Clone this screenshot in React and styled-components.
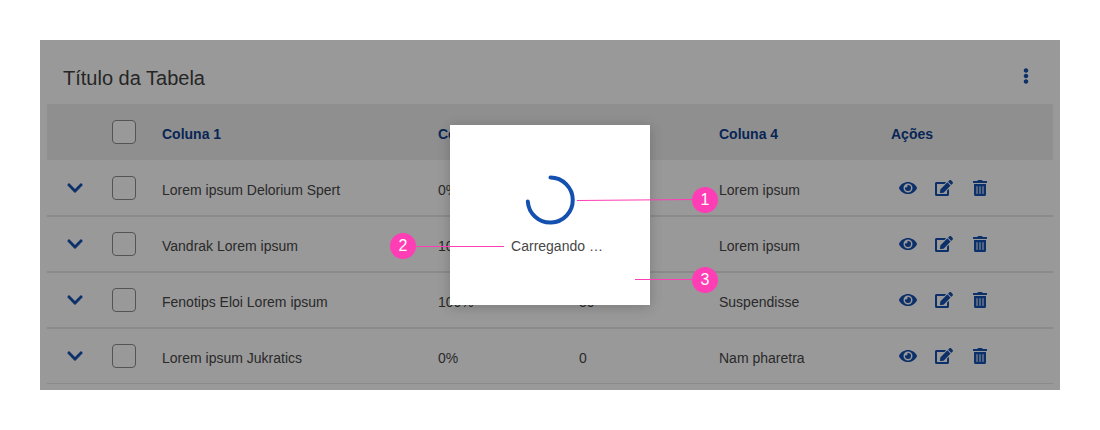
import React from "react";
import styled, { createGlobalStyle } from "styled-components";
import { FaChevronDown, FaEdit, FaEllipsisV, FaEye, FaTrashAlt } from "react-icons/fa";

const Global = createGlobalStyle`
  html, body { margin: 0; padding: 0; background: #fff; }
  body { font-family: "Liberation Sans", Arial, sans-serif; }
`;

const Page = styled.div`
  width: 1100px;
  height: 430px;
  padding: 40px;
  box-sizing: border-box;
`;

const Frame = styled.div`
  position: relative;
  width: 1020px;
  height: 350px;
  overflow: hidden;
  background: #fff;
  padding: 0 7px;
  box-sizing: border-box;
`;

const TitleBar = styled.div`
  height: 64px;
  display: flex;
  align-items: center;
  justify-content: space-between;
  padding: 12px 19px 0 16px;
  box-sizing: border-box;
`;

const Title = styled.h2`
  margin: 0;
  font-size: 20px;
  line-height: 24px;
  font-weight: 400;
  color: #3f3f3f;
`;

const MenuButton = styled.span`
  display: flex;
  color: #1450b0;
  font-size: 16px;
  margin-top: -4px;
`;

const GRID = "65px 50px 276px 141px 140px 172px 1fr";

const HeaderRow = styled.div`
  display: grid;
  grid-template-columns: ${GRID};
  height: 56px;
  margin-bottom: 1px;
  align-items: center;
  background: #eeeeee;
`;

const HeadCell = styled.div`
  font-size: 14px;
  padding-top: 4px;
  font-weight: 700;
  color: #0e3f90;
`;

const Row = styled.div`
  display: grid;
  grid-template-columns: ${GRID};
  height: ${(p) => (p.$last ? "55px" : "56px")};
  box-sizing: border-box;
  align-items: center;
  border-bottom: ${(p) => (p.$last ? "1px" : "2px")} solid #e6e6e6;
`;

const Cell = styled.div`
  font-size: 14px;
  padding-top: 4px;
  color: #474747;
  white-space: nowrap;
`;

const Expand = styled.span`
  display: flex;
  justify-content: flex-start;
  padding-left: 19px;
  color: #1450b0;
  font-size: 18px;
`;

const Check = styled.span`
  display: block;
  width: 24px;
  height: 24px;
  box-sizing: border-box;
  border: 1px solid #8c8c8c;
  border-radius: 4px;
  background: #fff;
`;

const Actions = styled.div`
  display: flex;
  align-items: center;
  gap: 16px;
  padding-left: 7px;
  color: #1450b0;
`;

const ActionIcon = styled.span`
  display: flex;
  width: 20px;
  justify-content: center;
  font-size: ${(p) => p.$size}px;
`;

const Overlay = styled.div`
  position: absolute;
  inset: 0;
  background: rgba(0, 0, 0, 0.4);
`;

const Modal = styled.div`
  position: absolute;
  left: 410px;
  top: 85px;
  width: 200px;
  height: 180px;
  background: #fff;
  box-shadow: 0 2px 12px rgba(0, 0, 0, 0.2);
  display: flex;
  flex-direction: column;
  align-items: center;
  padding-top: 50px;
  box-sizing: border-box;
`;

const Spinner = styled.svg`
  display: block;
  width: 50px;
  height: 50px;
`;

const LoadingText = styled.div`
  margin-top: 12px;
  padding-left: 14px;
  font-size: 14px;
  line-height: 18px;
  color: #474747;
  white-space: nowrap;
`;

const Marks = styled.svg`
  position: absolute;
  left: 0;
  top: 0;
  width: 1020px;
  height: 350px;
`;

const Badge = styled.span`
  position: absolute;
  left: ${(p) => p.$x}px;
  top: ${(p) => p.$y}px;
  width: 26px;
  height: 26px;
  border-radius: 50%;
  background: #ff3db5;
  color: #fff;
  font-size: 16px;
  display: flex;
  align-items: center;
  justify-content: center;
`;

const rows = [
  ["Lorem ipsum Delorium Spert", "0%", "", "Lorem ipsum"],
  ["Vandrak Lorem ipsum", "100%", "", "Lorem ipsum"],
  ["Fenotips Eloi Lorem ipsum", "100%", "50", "Suspendisse"],
  ["Lorem ipsum Jukratics", "0%", "0", "Nam pharetra"],
];

export default function App() {
  return (
    <>
      <Global />
      <Page>
        <Frame>
          <TitleBar>
            <Title>Título da Tabela</Title>
            <MenuButton><FaEllipsisV /></MenuButton>
          </TitleBar>
          <HeaderRow>
            <span />
            <Check />
            <HeadCell>Coluna 1</HeadCell>
            <HeadCell>Coluna 2</HeadCell>
            <HeadCell>Coluna 3</HeadCell>
            <HeadCell>Coluna 4</HeadCell>
            <HeadCell>Ações</HeadCell>
          </HeaderRow>
          {rows.map((r, i) => (
            <Row key={r[0]} $last={i === rows.length - 1}>
              <Expand><FaChevronDown /></Expand>
              <Check />
              <Cell>{r[0]}</Cell>
              <Cell>{r[1]}</Cell>
              <Cell>{r[2]}</Cell>
              <Cell>{r[3]}</Cell>
              <Actions>
                <ActionIcon $size={18}><FaEye /></ActionIcon>
                <ActionIcon $size={18}><FaEdit /></ActionIcon>
                <ActionIcon $size={16}><FaTrashAlt /></ActionIcon>
              </Actions>
            </Row>
          ))}
          <Overlay />
          <Modal>
            <Spinner viewBox="0 0 50 50">
              <path
                d="M 25.5 2.6 A 22.5 22.5 0 1 1 2.8 26.5"
                fill="none"
                stroke="#1450b0"
                strokeWidth="4"
                strokeLinecap="round"
              />
            </Spinner>
            <LoadingText>Carregando …</LoadingText>
          </Modal>
          <Marks viewBox="0 0 1020 350">
            <line x1="537" y1="160.5" x2="652" y2="159.5" stroke="#ff3db5" strokeWidth="1" />
            <line x1="376" y1="206.5" x2="464" y2="206.5" stroke="#ff3db5" strokeWidth="1" />
            <line x1="595" y1="239.5" x2="652" y2="239.5" stroke="#ff3db5" strokeWidth="1" />
          </Marks>
          <Badge $x={652} $y={147}>1</Badge>
          <Badge $x={350} $y={193}>2</Badge>
          <Badge $x={652} $y={227}>3</Badge>
        </Frame>
      </Page>
    </>
  );
}
